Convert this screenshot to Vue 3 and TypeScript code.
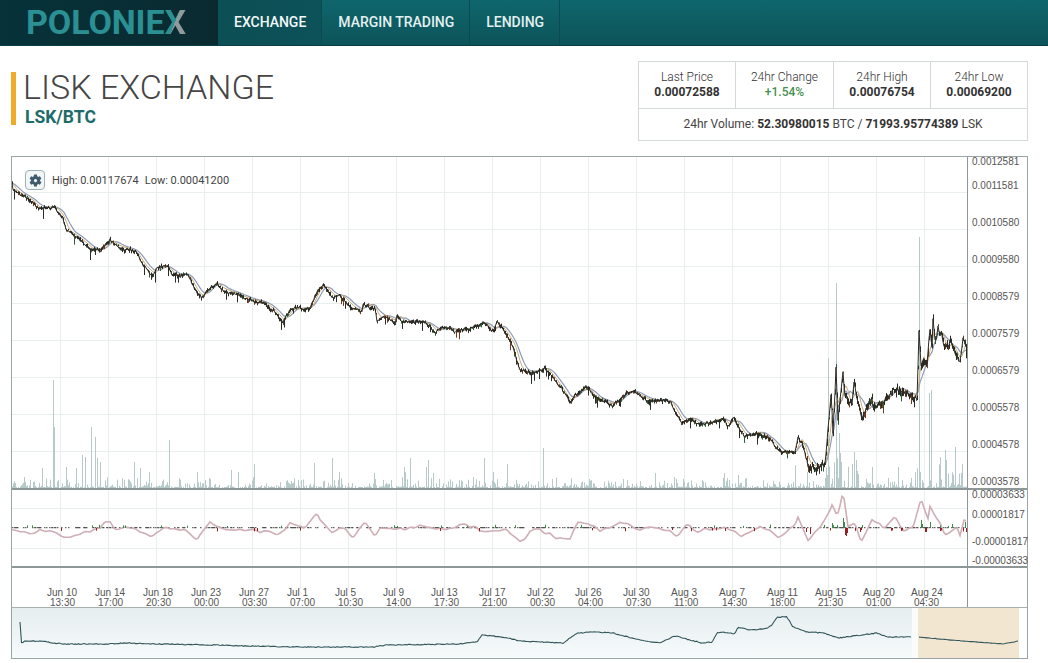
<template>
    <div class="page">
        <header class="topbar">
            <div class="logo">POLONIE<span class="logo-x">X</span></div>
            <nav class="tabs">
                <a class="tab active">Exchange</a>
                <a class="tab">Margin Trading</a>
                <a class="tab">Lending</a>
            </nav>
        </header>

        <section class="summary">
            <div class="title-block">
                <h1>LISK EXCHANGE</h1>
                <div class="pair">LSK/BTC</div>
            </div>
            <div class="stats">
                <div class="stats-row">
                    <div v-for="s in stats" :key="s.label" class="stat">
                        <div class="stat-label">{{ s.label }}</div>
                        <div class="stat-value" :class="{ up: s.up }">{{ s.value }}</div>
                    </div>
                </div>
                <div class="volume">
                    24hr Volume: <b>52.30980015</b> BTC / <b>71993.95774389</b> LSK
                </div>
            </div>
        </section>

        <section class="chart">
            <div class="panel panel-main">
                <svg class="plot" width="955" height="331" viewBox="12 157 955 331">
                    <path class="grid" :d="gridMain" />
                    <path class="volume-bars" :d="volumePath" />
                    <path class="ma-slow" :d="maSlow" />
                    <path class="ma-fast" :d="maFast" />
                    <path class="wicks" :d="wicks" />
                    <path class="wicks-red" :d="wicksRed" />
                    <path class="wicks-green" :d="wicksGreen" />
                    <path class="price" :d="pricePath" />
                </svg>
                <svg class="axis" width="60" height="331" viewBox="968 157 60 331">
                    <text v-for="t in mainLabels" :key="t.text" x="972" :y="t.y">{{ t.text }}</text>
                </svg>
                <div class="legend">
                    <button class="gear">
                        <svg width="15" height="15" viewBox="0 0 24 24">
                            <path d="M19.14 12.94c.04-.3.06-.61.06-.94 0-.32-.02-.64-.07-.94l2.03-1.58a.49.49 0 0 0 .12-.61l-1.92-3.32a.488.488 0 0 0-.59-.22l-2.39.96c-.5-.38-1.03-.7-1.62-.94l-.36-2.54a.484.484 0 0 0-.48-.41h-3.84c-.24 0-.43.17-.47.41l-.36 2.54c-.59.24-1.13.57-1.62.94l-2.39-.96c-.22-.08-.47 0-.59.22L2.74 8.87c-.12.21-.08.47.12.61l2.03 1.58c-.05.3-.09.63-.09.94s.02.64.07.94l-2.03 1.58a.49.49 0 0 0-.12.61l1.92 3.32c.12.22.37.29.59.22l2.39-.96c.5.38 1.03.7 1.62.94l.36 2.54c.05.24.24.41.48.41h3.84c.24 0 .44-.17.47-.41l.36-2.54c.59-.24 1.13-.56 1.62-.94l2.39.96c.22.08.47 0 .59-.22l1.92-3.32c.12-.22.07-.47-.12-.61l-2.01-1.58zM12 14.6a2.6 2.6 0 1 1 0-5.2 2.6 2.6 0 0 1 0 5.2z" />
                        </svg>
                    </button>
                    <span>High: 0.00117674</span>
                    <span>Low: 0.00041200</span>
                </div>
            </div>

            <div class="panel panel-macd">
                <svg class="plot" width="955" height="76" viewBox="12 490 955 76">
                    <path class="grid" :d="gridMacd" />
                    <path class="signal" :d="signalPath" />
                    <path class="macd-line" :d="macdPath" />
                    <path class="hist-green" :d="histGreen" />
                    <path class="hist-red" :d="histRed" />
                </svg>
                <svg class="axis" width="60" height="76" viewBox="968 490 60 76">
                    <text v-for="t in macdLabels" :key="t.text" x="972" :y="t.y">{{ t.text }}</text>
                </svg>
            </div>

            <div class="panel panel-dates">
                <svg class="plot" width="955" height="39" viewBox="12 568 955 39">
                    <path class="grid" :d="gridDates" />
                    <g v-for="d in dates" :key="d.date">
                        <text :x="d.x - 13.5" y="595.5">{{ d.date }}</text>
                        <text :x="d.x - 10.5" y="605.5">{{ d.time }}</text>
                    </g>
                </svg>
                <div class="axis-blank"></div>
            </div>

            <div class="navigator">
                <div class="nav-range"></div>
                <div class="nav-gap"></div>
                <div class="nav-window"></div>
                <svg class="nav-line" width="1015" height="50" viewBox="12 608 1015 50">
                    <path :d="navPath" />
                </svg>
            </div>
        </section>
    </div>
</template>

<script setup lang="ts">
type Pt = [number, number]

const stats = [
    { label: 'Last Price', value: '0.00072588' },
    { label: '24hr Change', value: '+1.54%', up: true },
    { label: '24hr High', value: '0.00076754' },
    { label: '24hr Low', value: '0.00069200' }
]

const mainLabels = [
    ['0.0012581', 164.6], ['0.0011581', 189], ['0.0010580', 226], ['0.0009580', 263],
    ['0.0008579', 300], ['0.0007579', 337], ['0.0006579', 374], ['0.0005578', 411],
    ['0.0004578', 448], ['0.0003578', 485]
].map(([text, y]) => ({ text: text as string, y: y as number }))

const macdLabels = [
    { text: '0.00003633', y: 498 },
    { text: '0.00001817', y: 518 },
    { text: '-0.00001817', y: 545 },
    { text: '-0.00003633', y: 564.4 }
]

const dateNames: [string, string][] = [
    ['Jun 10', '13:30'], ['Jun 14', '17:00'], ['Jun 18', '20:30'], ['Jun 23', '00:00'],
    ['Jun 27', '03:30'], ['Jul 1', '07:00'], ['Jul 5', '10:30'], ['Jul 9', '14:00'],
    ['Jul 13', '17:30'], ['Jul 17', '21:00'], ['Jul 22', '00:30'], ['Jul 26', '04:00'],
    ['Jul 30', '07:30'], ['Aug 3', '11:00'], ['Aug 7', '14:30'], ['Aug 11', '18:00'],
    ['Aug 15', '21:30'], ['Aug 20', '01:00'], ['Aug 24', '04:30']
]
const gridXs = dateNames.map((_, i) => 60.5 + i * 48)
const dates = dateNames.map(([date, time], i) => ({ date, time, x: gridXs[i] }))

const gridYs = [192.5, 229.5, 266.5, 303.5, 340.5, 377.5, 414.5, 451.5]
const gridMain =
    gridXs.map((x) => `M${x} 157V488`).join('') + gridYs.map((y) => `M12 ${y}H967`).join('')
const gridMacd =
    gridXs.map((x) => `M${x} 490V566`).join('') + [508, 548].map((y) => `M12 ${y}.5H967`).join('')
const gridDates = gridXs.map((x) => `M${x} 568V590`).join('')

const pricePts: Pt[] = [
    [12, 184], [13, 190], [33, 202], [37, 208], [55, 208], [63, 218], [66, 230], [78, 238], [92, 250],
    [100, 251], [110, 240], [115, 245], [135, 252], [143, 265], [153, 275], [157, 268], [168, 267],
    [172, 275], [187, 275], [197, 293], [202, 297], [210, 287], [217, 282], [220, 288], [233, 293],
    [250, 300], [263, 303], [273, 310], [283, 322], [290, 310], [310, 308], [317, 292], [323, 285],
    [333, 297], [340, 295], [353, 308], [362, 312], [363, 303], [375, 308], [377, 320], [383, 315],
    [395, 322], [397, 313], [402, 322], [417, 322], [430, 325], [435, 333], [442, 328], [460, 332],
    [477, 325], [483, 322], [493, 333], [497, 323], [503, 330], [513, 345], [520, 370], [530, 373],
    [545, 368], [557, 383], [570, 403], [575, 393], [588, 388], [593, 397], [613, 405], [627, 392],
    [633, 392], [647, 400], [670, 402], [682, 423], [690, 417], [698, 425], [707, 423], [723, 418],
    [727, 427], [733, 418], [745, 437], [758, 432], [772, 442], [780, 453], [795, 453], [798, 437],
    [802, 442], [808, 465], [817, 467], [825, 462], [827, 442], [829, 420], [831, 393], [833, 433],
    [836, 370], [838, 420], [843, 370], [845, 397], [852, 402], [854, 383], [860, 410], [862, 417],
    [872, 397], [873, 407], [883, 400], [897, 387], [903, 393], [917, 397], [919, 332], [921, 367],
    [927, 362], [930, 327], [932, 347], [933, 318], [935, 342], [938, 328], [942, 337], [945, 350],
    [950, 342], [957, 357], [960, 363], [963, 337], [967, 350]
]

const macdPts: Pt[] = [
    [12, 529], [30, 533], [45, 530], [63, 537], [80, 533], [95, 531], [110, 520], [115, 528], [130, 528],
    [145, 535], [153, 537], [165, 527], [185, 530], [197, 540], [210, 522], [220, 528], [240, 530],
    [260, 531], [277, 535], [290, 523], [305, 528], [317, 513], [325, 526], [332, 533], [345, 527],
    [353, 537], [365, 522], [375, 537], [380, 527], [400, 530], [420, 527], [440, 529], [465, 525],
    [485, 530], [507, 530], [520, 542], [535, 528], [557, 538], [570, 537], [578, 523], [588, 523],
    [600, 531], [627, 522], [640, 530], [660, 528], [677, 535], [687, 525], [698, 531], [720, 527],
    [742, 535], [760, 526], [778, 537], [795, 526], [798, 518], [808, 540], [820, 528], [828, 513],
    [832, 505], [837, 517], [843, 492], [848, 527], [855, 522], [861, 543], [872, 520], [883, 528],
    [895, 518], [903, 530], [913, 528], [921, 498], [928, 517], [930, 505], [940, 523], [945, 537],
    [957, 527], [960, 535], [965, 515], [967, 525]
]

const navPts: Pt[] = [
    [20, 622], [21, 643], [25, 641], [42, 641], [53, 643], [67, 644], [107, 644], [127, 643], [160, 644],
    [213, 645], [247, 646], [300, 647], [373, 647], [387, 645], [457, 644], [477, 642], [482, 635],
    [503, 637], [520, 641], [563, 643], [577, 633], [597, 632], [613, 633], [635, 639], [660, 643],
    [675, 636], [690, 640], [702, 643], [712, 642], [717, 633], [722, 632], [735, 634], [738, 627],
    [750, 630], [765, 629], [772, 625], [777, 617], [787, 617], [793, 627], [807, 632], [823, 633],
    [838, 638], [877, 633], [888, 637], [911, 637]
]
const navTail: Pt[] = [[919, 637], [950, 640], [977, 642], [1003, 644], [1018, 641]]

const spikes: Record<number, number> = {
    42: 468, 53: 380, 54: 427, 66: 467, 76: 468, 82: 455, 85: 457, 91: 427, 95: 437, 97: 458,
    100: 462, 134: 462, 140: 468, 149: 472, 169: 440, 197: 472, 231: 470, 238: 472, 254: 464,
    314: 463, 332: 458, 339: 472, 374: 473, 404: 467, 405: 472, 410: 458, 426: 467, 428: 460, 433: 473,
    473: 477, 484: 458, 493: 472, 507: 464, 543: 448, 552: 479, 589: 479, 623: 479, 655: 473, 724: 473,
    738: 475, 795: 465, 807: 472, 828: 358, 836: 283, 839: 433, 840: 453, 841: 462, 854: 452, 856: 460,
    872: 467, 898: 467, 915: 472, 919: 237, 920: 472, 929: 393, 931: 390, 940: 457, 945: 450, 946: 460,
    955: 447
}

// hand-read bars of the histogram that stand out from the small ones
const bigHist: Pt[] = [
    [806, 532], [810, 534], [832, 523], [833, 525], [843, 518], [844, 522], [845, 535], [846, 536],
    [847, 533], [860, 532], [861, 530], [901, 531], [921, 520], [922, 524], [925, 532], [926, 532],
    [930, 522], [940, 531], [952, 524], [965, 522], [966, 532]
]

// fixed seed, so every load draws the same chart
let seed = 1337
function rnd(): number {
    seed = (seed * 1664525 + 1013904223) % 4294967296
    return seed / 4294967296
}

function lerp(pts: Pt[], x: number): number {
    for (let i = 1; i < pts.length; i++) {
        if (x <= pts[i][0]) {
            const [x0, y0] = pts[i - 1]
            const [x1, y1] = pts[i]
            return y0 + ((y1 - y0) * (x - x0)) / (x1 - x0 || 1)
        }
    }
    return pts[pts.length - 1][1]
}

// slow random wobble, one knot every `step` px
function makeWobble(step: number, amp: number): Pt[] {
    const pts: Pt[] = []
    for (let x = 0; x <= 1040; x += step) pts.push([x, (rnd() - 0.5) * 2 * amp])
    return pts
}

function movingAverage(n: number, lift: number): string {
    let d = ''
    for (let x = 12; x <= 967; x += 2) {
        let sum = 0
        for (let k = 0; k < n; k++) sum += lerp(pricePts, Math.max(12, x - k))
        d += `${d ? 'L' : 'M'}${x} ${(sum / n - lift).toFixed(1)}`
    }
    return d
}

const maFast = movingAverage(6, 0.5)
const maSlow = movingAverage(11, 1)

const priceWobble = makeWobble(5, 2.2)
let pricePath = ''
let wicks = ''
let wicksRed = ''
let wicksGreen = ''
for (let x = 12; x <= 967; x++) {
    const lively = x > 805 ? 2 : 1
    const y = lerp(pricePts, x) + lerp(priceWobble, x) * (x < 25 ? 0.3 : 1) * 0.8
    const c = y + (rnd() - 0.5) * 2.4 * lively
    pricePath += `${pricePath ? 'L' : 'M'}${x} ${c.toFixed(1)}`
    const up = rnd() * 2.2 * lively
    let down = rnd() * 3 * lively
    if (rnd() < 0.07) down += 3 + rnd() * 5
    const seg = `M${x + 0.5} ${(c - up).toFixed(1)}V${(c + down).toFixed(1)}`
    const pick = rnd()
    if (pick < 0.16) wicksRed += seg
    else if (pick < 0.28) wicksGreen += seg
    else wicks += seg
}

let volumePath = ''
for (let x = 12; x <= 967; x++) {
    const busy = (x > 825 && x < 860) || (x > 915 && x < 965) ? 3 : 1
    const r = rnd()
    const h = r * r * r * r * 10 * busy + (rnd() < 0.5 ? 1 : 0)
    const top = spikes[x] ?? 488 - h
    if (top < 487.5) volumePath += `M${x + 0.5} 488V${top.toFixed(1)}`
}

const macdWobble = makeWobble(5, 2)
let macdPath = ''
let signalPath = ''
let histGreen = ''
let histRed = ''
for (let x = 12; x <= 967; x += 2) {
    const v = lerp(macdPts, x) + lerp(macdWobble, x)
    macdPath += `${macdPath ? 'L' : 'M'}${x} ${v.toFixed(1)}`
}
for (let x = 12; x <= 967; x++) {
    // near the zero line the signal only shows in short dark dashes
    if (rnd() < 0.45) signalPath += `M${x} 527.7h1.5`
    const r = rnd()
    if (r < 0.035) histGreen += `M${x + 0.5} 528V${(526 - rnd() * 1.5).toFixed(1)}`
    else if (r < 0.07) histRed += `M${x + 0.5} 528V${(530 + rnd() * 1.5).toFixed(1)}`
}
for (const [x, y] of bigHist) {
    if (y < 528) histGreen += `M${x + 0.5} 528V${y}`
    else histRed += `M${x + 0.5} 528V${y}`
}

function polyline(pts: Pt[], wiggle: number): string {
    let d = ''
    for (let x = pts[0][0]; x <= pts[pts.length - 1][0]; x += 1.5) {
        const w = x > 21 ? (rnd() - 0.5) * wiggle : 0
        d += `${d ? 'L' : 'M'}${x} ${(lerp(pts, x) + w).toFixed(1)}`
    }
    return d
}

const navPath = polyline(navPts, 0.9) + polyline(navTail, 0.4)
</script>

<style scoped>
.page {
    width: 1048px;
    height: 663px;
    overflow: hidden;
    background: #fff;
    font-family: Roboto, 'Liberation Sans', sans-serif;
    color: #444;
}

.topbar {
    display: flex;
    height: 46px;
    box-sizing: border-box;
    background: linear-gradient(#0f666d, #0c5459);
    border-bottom: 1px solid #0a3f45;
}

.logo {
    width: 218px;
    box-sizing: border-box;
    padding-left: 26px;
    font-size: 34px;
    font-weight: 700;
    letter-spacing: -0.1px;
    line-height: 44px;
    color: #2b9093;
    background: linear-gradient(90deg, #063239, #0a2a30);
}

.logo-x {
    background: linear-gradient(112deg, #2b9093 50%, #8f9a9b 50%);
    -webkit-background-clip: text;
    background-clip: text;
    color: transparent;
}

.tabs {
    display: flex;
}

.tab {
    display: block;
    padding: 0 15px 0 16px;
    font-size: 14px;
    font-weight: 500;
    letter-spacing: -0.02px;
    line-height: 44px;
    text-transform: uppercase;
    color: #e4f0f0;
    border-right: 1px solid #0b4a50;
}

.tab.active {
    background: linear-gradient(90deg, #0c4f55, #0c5258);
    color: #f2f8f8;
}

.summary {
    display: flex;
    justify-content: space-between;
    align-items: flex-start;
    height: 110px;
    box-sizing: border-box;
    padding: 15px 20px 0 11px;
}

.title-block {
    margin-top: 11px;
    height: 53px;
    padding-left: 7px;
    border-left: 5px solid #f0ac28;
    box-sizing: border-box;
}

h1 {
    margin: -1px 0 0;
    font-size: 34px;
    font-weight: 300;
    line-height: 32px;
    color: #454545;
}

.pair {
    margin-top: 4px;
    margin-left: 2px;
    font-size: 17.5px;
    font-weight: 700;
    line-height: 20px;
    color: #1d6b6b;
}

.stats {
    width: 390px;
    box-sizing: border-box;
    border: 1px solid #d3d8d8;
    font-size: 12px;
    text-align: center;
}

.stats-row {
    display: grid;
    grid-template-columns: 96px 98px 97px 1fr;
    height: 46px;
    border-bottom: 1px solid #d3d8d8;
}

.stat {
    padding-top: 8px;
    line-height: 15px;
    border-left: 1px solid #d3d8d8;
}

.stat:first-child {
    border-left: none;
}

.stat-label {
    font-weight: 300;
    color: #333;
}

.stat-value {
    font-weight: 700;
    color: #333;
}

.stat-value.up {
    color: #46914f;
    font-weight: 500;
}

.volume {
    height: 31px;
    line-height: 31px;
    color: #444;
}

.volume b {
    font-weight: 700;
    color: #333;
}

.chart {
    width: 1017px;
    height: 503px;
    margin-left: 11px;
    box-sizing: border-box;
    border: 1px solid #9aa5a5;
    display: flex;
    flex-direction: column;
}

.panel {
    display: flex;
    position: relative;
}

.panel-main {
    height: 331px;
    border-bottom: 2px solid #8d9797;
}

.panel-macd {
    height: 76px;
    border-bottom: 2px solid #8d9797;
}

.panel-dates {
    height: 39px;
    border-bottom: 1px solid #a6b0b0;
}

.plot {
    display: block;
    flex: none;
}

.plot text,
.axis text {
    font-family: 'Liberation Sans', sans-serif;
    font-size: 10px;
    fill: #555;
}

.axis {
    display: block;
    flex: none;
    border-left: 1px solid #8d9797;
    box-sizing: content-box;
}

.axis-blank {
    flex: 1;
    border-left: 1px solid #8d9797;
}

.grid {
    fill: none;
    stroke: #e9efef;
    stroke-width: 1;
}

.volume-bars {
    fill: none;
    stroke: #b7caca;
    stroke-width: 1;
}

.price {
    fill: none;
    stroke: #2b2b26;
    stroke-width: 1;
}

.wicks {
    fill: none;
    stroke: #2b2b26;
    stroke-width: 1;
}

.wicks-red {
    fill: none;
    stroke: #6e3a20;
    stroke-width: 1;
}

.wicks-green {
    fill: none;
    stroke: #2e5e35;
    stroke-width: 1;
}

.ma-fast {
    fill: none;
    stroke: #c9ab7c;
    stroke-width: 1;
}

.ma-slow {
    fill: none;
    stroke: #8b9bb6;
    stroke-width: 1.2;
}

.signal {
    fill: none;
    stroke: #2f2f2f;
    stroke-width: 0.9;
}

.macd-line {
    fill: none;
    stroke: #cfaeb6;
    stroke-width: 1.6;
}

.hist-green {
    fill: none;
    stroke: #3d8a4c;
    stroke-width: 1;
}

.hist-red {
    fill: none;
    stroke: #96201f;
    stroke-width: 1;
}

.legend {
    position: absolute;
    left: 13px;
    top: 13px;
    display: flex;
    align-items: center;
    font-size: 11px;
    color: #444;
}

.legend span {
    margin-left: 7px;
}

.legend span:last-child {
    margin-left: 6px;
}

.gear {
    display: flex;
    align-items: center;
    justify-content: center;
    width: 20px;
    height: 20px;
    padding: 0;
    border: 1px solid #9db0b8;
    border-radius: 4px;
    background: #f2f6f7;
}

.gear path {
    fill: #3f5c6c;
}

.navigator {
    flex: 1;
    display: flex;
    position: relative;
    background: linear-gradient(#e6eef0, #f6fafb);
}

.nav-range {
    width: 900px;
}

.nav-gap {
    width: 6px;
    background: #fafbfb;
}

.nav-window {
    width: 101px;
    background: #f3e6d0;
}

.navigator::after {
    content: '';
    flex: 1;
    background: #fff;
}

.nav-line {
    position: absolute;
    left: 0;
    top: 0;
}

.nav-line path {
    fill: none;
    stroke: #33565b;
    stroke-width: 1.1;
}
</style>

<style>
html,
body {
    margin: 0;
    background: #fff;
}
</style>
